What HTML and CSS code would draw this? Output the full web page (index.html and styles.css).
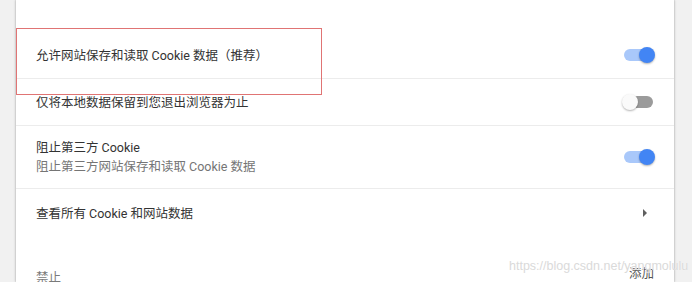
FILE: index.html
```html
<!DOCTYPE html>
<html lang="zh-CN">
<head>
<meta charset="utf-8">
<link rel="stylesheet" href="styles.css">
</head>
<body>
<div class="page">
  <div class="card">
    <div class="row row-first">
      <div class="label">允许网站保存和读取 Cookie 数据（推荐）</div>
      <div class="toggle on"><span class="track"></span><span class="knob"></span></div>
    </div>
    <div class="row">
      <div class="label">仅将本地数据保留到您退出浏览器为止</div>
      <div class="toggle off"><span class="track"></span><span class="knob"></span></div>
    </div>
    <div class="row row-tall">
      <div class="label-group">
        <div class="label">阻止第三方 Cookie</div>
        <div class="sublabel">阻止第三方网站保存和读取 Cookie 数据</div>
      </div>
      <div class="toggle on"><span class="track"></span><span class="knob"></span></div>
    </div>
    <div class="row row-link">
      <div class="label">查看所有 Cookie 和网站数据</div>
      <div class="arrow-box"><span class="arrow"></span></div>
    </div>
    <div class="section">
      <div class="section-title">禁止</div>
      <div class="add-btn">添加</div>
    </div>
    <div class="highlight"></div>
  </div>
  <div class="watermark">https://blog.csdn.net/yangmolulu</div>
</div>
</body>
</html>
```

FILE: styles.css
```css
html, body {
  margin: 0;
  padding: 0;
  background: #f1f1f1;
  width: 692px;
  height: 282px;
  overflow: hidden;
}

.page {
  position: relative;
  width: 692px;
  height: 282px;
  overflow: hidden;
  font-family: Roboto, "Noto Sans CJK SC", sans-serif;
  font-size: 12.5px;
  color: #333333;
}

.card {
  position: relative;
  margin-left: 16px;
  width: 658px;
  height: 282px;
  overflow: hidden;
  background: #ffffff;
  box-shadow: 0 0 1px rgba(0,0,0,0.25), 1px 0 2px rgba(0,0,0,0.12), -1px 0 2px rgba(0,0,0,0.12);
  padding-top: 32px;
  box-sizing: border-box;
}

.row {
  display: flex;
  align-items: center;
  justify-content: space-between;
  height: 47px;
  box-sizing: border-box;
  padding: 0 19px 0 20px;
  border-bottom: 1px solid #ececec;
}

.row-tall {
  height: 63px;
}

.row-link {
  border-bottom: none;
  height: 48px;
}

.label {
  line-height: 19px;
  color: #333333;
}

.label-group {
  display: flex;
  flex-direction: column;
}

.sublabel {
  line-height: 19px;
  color: #757575;
}

.toggle {
  position: relative;
  width: 33px;
  height: 16px;
  flex: none;
}

.track {
  position: absolute;
  left: 2px;
  right: 2px;
  top: 2px;
  height: 12px;
  border-radius: 6px;
}

.knob {
  position: absolute;
  top: 0;
  width: 16px;
  height: 16px;
  border-radius: 50%;
  box-shadow: 0 1px 2px rgba(0,0,0,0.3);
}

.toggle.on .track {
  background: #a9c8fa;
}

.toggle.on .knob {
  right: 0;
  background: #4285f4;
}

.toggle.off .track {
  background: #9b9b9b;
}

.toggle.off .knob {
  left: 0;
  background: #fafafa;
}

.arrow-box {
  width: 16px;
  height: 16px;
  display: flex;
  align-items: center;
  justify-content: flex-end;
  padding-right: 8px;
}

.arrow {
  display: block;
  width: 0;
  height: 0;
  border-left: 4px solid #5f5f5f;
  border-top: 4px solid transparent;
  border-bottom: 4px solid transparent;
}

.section {
  display: flex;
  justify-content: space-between;
  align-items: flex-end;
  padding: 27px 20px 0 20px;
}

.section-title {
  color: #7a7a7a;
  line-height: 19px;
  padding-top: 4px;
}

.add-btn {
  color: #555555;
  line-height: 19px;
  padding-bottom: 4px;
}

.highlight {
  position: absolute;
  left: 0;
  top: 28px;
  width: 306px;
  height: 67px;
  box-sizing: border-box;
  border: 1px solid #e07474;
}

.watermark {
  position: absolute;
  left: 509px;
  top: 259px;
  font-family: "Liberation Sans", Arial, sans-serif;
  font-size: 12.5px;
  color: #dadada;
  text-shadow: 0 0 1px #ffffff;
  pointer-events: none;
}
```
